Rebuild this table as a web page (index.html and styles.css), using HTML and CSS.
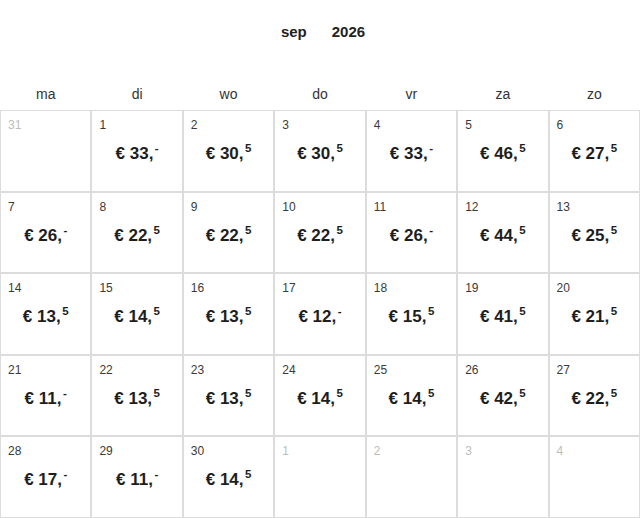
FILE: index.html
```html
<!DOCTYPE html>
<html lang="nl">
<head>
<meta charset="utf-8">
<title>Kalender</title>
<link rel="stylesheet" href="styles.css">
</head>
<body>
<div class="cal">
  <div class="title"><span>sep</span><span>2026</span></div>
  <div class="weekdays">
    <div>ma</div><div>di</div><div>wo</div><div>do</div><div>vr</div><div>za</div><div>zo</div>
  </div>
  <div class="grid">
    <div class="cell other"><span class="num">31</span></div>
    <div class="cell"><span class="num">1</span><span class="price">€ 33,<sup>-</sup></span></div>
    <div class="cell"><span class="num">2</span><span class="price">€ 30,<sup>5</sup></span></div>
    <div class="cell"><span class="num">3</span><span class="price">€ 30,<sup>5</sup></span></div>
    <div class="cell"><span class="num">4</span><span class="price">€ 33,<sup>-</sup></span></div>
    <div class="cell"><span class="num">5</span><span class="price">€ 46,<sup>5</sup></span></div>
    <div class="cell"><span class="num">6</span><span class="price">€ 27,<sup>5</sup></span></div>

    <div class="cell"><span class="num">7</span><span class="price">€ 26,<sup>-</sup></span></div>
    <div class="cell"><span class="num">8</span><span class="price">€ 22,<sup>5</sup></span></div>
    <div class="cell"><span class="num">9</span><span class="price">€ 22,<sup>5</sup></span></div>
    <div class="cell"><span class="num">10</span><span class="price">€ 22,<sup>5</sup></span></div>
    <div class="cell"><span class="num">11</span><span class="price">€ 26,<sup>-</sup></span></div>
    <div class="cell"><span class="num">12</span><span class="price">€ 44,<sup>5</sup></span></div>
    <div class="cell"><span class="num">13</span><span class="price">€ 25,<sup>5</sup></span></div>

    <div class="cell"><span class="num">14</span><span class="price">€ 13,<sup>5</sup></span></div>
    <div class="cell"><span class="num">15</span><span class="price">€ 14,<sup>5</sup></span></div>
    <div class="cell"><span class="num">16</span><span class="price">€ 13,<sup>5</sup></span></div>
    <div class="cell"><span class="num">17</span><span class="price">€ 12,<sup>-</sup></span></div>
    <div class="cell"><span class="num">18</span><span class="price">€ 15,<sup>5</sup></span></div>
    <div class="cell"><span class="num">19</span><span class="price">€ 41,<sup>5</sup></span></div>
    <div class="cell"><span class="num">20</span><span class="price">€ 21,<sup>5</sup></span></div>

    <div class="cell"><span class="num">21</span><span class="price">€ 11,<sup>-</sup></span></div>
    <div class="cell"><span class="num">22</span><span class="price">€ 13,<sup>5</sup></span></div>
    <div class="cell"><span class="num">23</span><span class="price">€ 13,<sup>5</sup></span></div>
    <div class="cell"><span class="num">24</span><span class="price">€ 14,<sup>5</sup></span></div>
    <div class="cell"><span class="num">25</span><span class="price">€ 14,<sup>5</sup></span></div>
    <div class="cell"><span class="num">26</span><span class="price">€ 42,<sup>5</sup></span></div>
    <div class="cell"><span class="num">27</span><span class="price">€ 22,<sup>5</sup></span></div>

    <div class="cell"><span class="num">28</span><span class="price">€ 17,<sup>-</sup></span></div>
    <div class="cell"><span class="num">29</span><span class="price">€ 11,<sup>-</sup></span></div>
    <div class="cell"><span class="num">30</span><span class="price">€ 14,<sup>5</sup></span></div>
    <div class="cell other"><span class="num">1</span></div>
    <div class="cell other"><span class="num">2</span></div>
    <div class="cell other"><span class="num">3</span></div>
    <div class="cell other"><span class="num">4</span></div>
  </div>
</div>
</body>
</html>
```

FILE: styles.css
```css
html, body {
  margin: 0;
  padding: 0;
  background: #fff;
}

body {
  font-family: "Liberation Sans", Arial, sans-serif;
  color: #222;
}

.cal {
  width: 640px;
}

.title {
  display: flex;
  justify-content: center;
  gap: 25px;
  padding-top: 22px;
  height: 20px;
  line-height: 20px;
  font-size: 15px;
  font-weight: bold;
  color: #222;
  padding-left: 6px;
}

.weekdays {
  display: grid;
  grid-template-columns: repeat(7, 1fr);
  margin-top: 42px;
  height: 20px;
  line-height: 20px;
  font-size: 14px;
  color: #333;
  text-align: center;
  margin-bottom: 6px;
}

.grid {
  display: grid;
  grid-template-columns: repeat(7, 1fr);
  grid-template-rows: repeat(5, 1fr);
  height: 408px;
}

.cell {
  border: 1px solid #dcdcdc;
  display: flex;
  flex-direction: column;
  padding: 7px 7px 0;
  min-width: 0;
}

.num {
  font-size: 12px;
  line-height: 15px;
  color: #3a3a3a;
}

.other .num {
  color: #bdbdbd;
}

.price {
  margin-top: 8px;
  text-align: center;
  font-size: 17px;
  font-weight: bold;
  line-height: 26px;
  color: #1e1e1e;
}

.price sup {
  font-size: 11.5px;
  line-height: 0;
  vertical-align: 0;
  position: relative;
  top: -7px;
  margin-left: 1.5px;
}
```
